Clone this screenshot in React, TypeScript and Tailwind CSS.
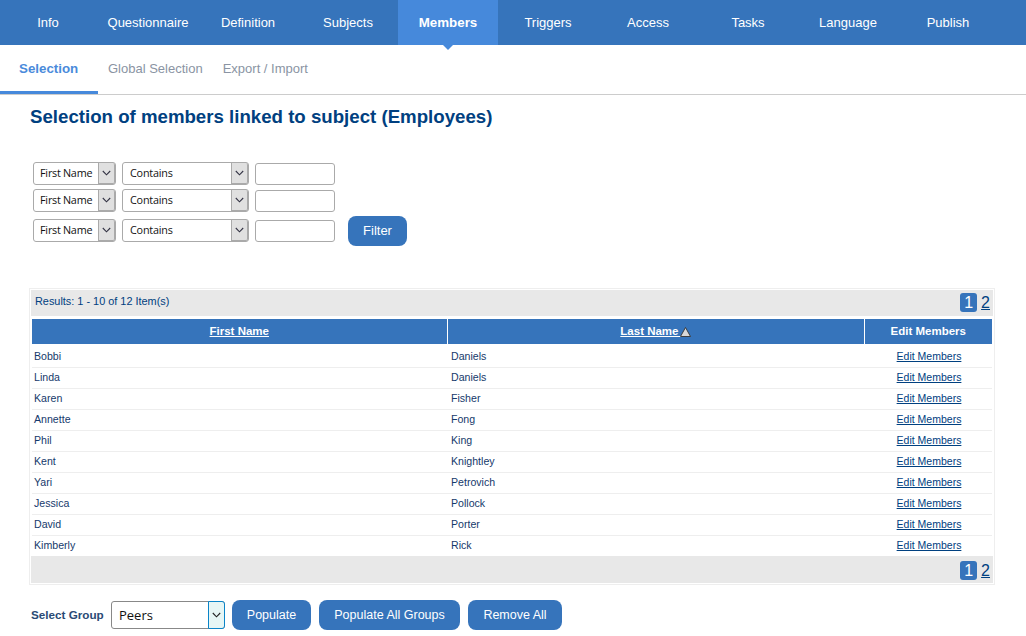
import React from "react";

const tabs = ["Info", "Questionnaire", "Definition", "Subjects", "Members", "Triggers", "Access", "Tasks", "Language", "Publish"];
const rows = [
  ["Bobbi", "Daniels"], ["Linda", "Daniels"], ["Karen", "Fisher"], ["Annette", "Fong"], ["Phil", "King"],
  ["Kent", "Knightley"], ["Yari", "Petrovich"], ["Jessica", "Pollock"], ["David", "Porter"], ["Kimberly", "Rick"],
];

function Chevron({ color = "#334" }: { color?: string }) {
  return (
    <svg width="9" height="6" viewBox="0 0 9 6" fill="none">
      <path d="M0.8 1 L4.5 4.8 L8.2 1" stroke={color} strokeWidth="1.1" />
    </svg>
  );
}

function FSelect({ label, w, pl }: { label: string; w: string; pl: string }) {
  return (
    <div className={`${w} flex h-full rounded-[3px] border border-[#aaa] bg-white`}>
      <span className={`flex-1 ${pl} flex items-center text-[10.8px] text-[#111] font-['Open_Sans',sans-serif] tracking-[-0.2px] [word-spacing:-0.4px]`}>{label}</span>
      <span className="w-[17px] flex items-center justify-center bg-[#e0e0e0] border-l border-r border-b border-[#aaa] rounded-r-[2px]">
        <Chevron />
      </span>
    </div>
  );
}

function FilterRow({ children }: { children?: React.ReactNode }) {
  return (
    <div className="flex items-center h-[23px]">
      <FSelect label="First Name" w="w-[83px]" pl="pl-[6px]" />
      <div className="w-[6px]" />
      <FSelect label="Contains" w="w-[127px]" pl="pl-[7px]" />
      <div className="w-[6px]" />
      <div className="w-[80px] h-[22px] rounded-[3px] border border-[#aaa] bg-white" />
      {children}
    </div>
  );
}

function Btn({ children, w }: { children: React.ReactNode; w: string }) {
  return (
    <button className={`${w} h-[30px] rounded-[8px] bg-[#3674bb] text-white text-[12.5px]`}>
      {children}
    </button>
  );
}

function Pager() {
  return (
    <div className="flex items-center justify-end gap-[4px] text-[16px] leading-[19px] pr-[3px]">
      <span className="w-[17px] h-[19px] rounded-[3px] bg-[#3674bb] text-white text-center">1</span>
      <span className="underline text-[#004080]">2</span>
    </div>
  );
}

export default function App() {
  return (
    <div className="w-[1026px] h-[636px] overflow-hidden bg-white font-['Liberation_Sans',sans-serif]">
      <nav className="h-[45px] bg-[#3674bb] flex -ml-[2px]">
        {tabs.map((t) => (
          <div
            key={t}
            className={`relative w-[100px] flex items-center justify-center text-white ${t === "Members" ? "bg-[#4689db] font-bold text-[13.33px]" : "text-[13px]"}`}
          >
            {t}
            {t === "Members" && (
              <span className="absolute left-1/2 -translate-x-1/2 top-full w-0 h-0 border-l-[5px] border-r-[5px] border-t-[5px] border-l-transparent border-r-transparent border-t-[#4689db]" />
            )}
          </div>
        ))}
      </nav>
      <div className="h-[50px] border-b border-[#ccc] flex text-[13px]">
        <div className="w-[98px] h-[49px] border-b-[3px] border-[#4689db] pt-[14px] pl-[19px] font-bold text-[13.33px] text-[#4a8bdb]">Selection</div>
        <div className="pt-[14px] pl-[10px] text-[#8a94a3]">Global Selection</div>
        <div className="pt-[14px] pl-[20px] text-[#8a94a3]">Export / Import</div>
      </div>

      <h1 className="ml-[30px] mt-[11px] text-[18.67px] leading-[22px] font-bold text-[#004080]">
        Selection of members linked to subject (Employees)
      </h1>

      <div className="ml-[33px] mt-[34px] flex flex-col">
        <FilterRow />
        <div className="h-[4px]" />
        <FilterRow />
        <div className="h-[7px]" />
        <FilterRow>
          <button className="ml-[13px] w-[59px] h-[30px] shrink-0 rounded-[8px] bg-[#3674bb] text-white text-[13px]">Filter</button>
        </FilterRow>
      </div>

      <div className="ml-[29px] mt-[46px] w-[966px] h-[297px] border border-[#eee] p-px flex flex-col">
        <div className="h-[26px] shrink-0 bg-[#e8e8e8] flex items-center justify-between pl-[4px]">
          <span className="text-[10.9px] text-[#004080] -mt-[4px]">Results: 1 - 10 of 12 Item(s)</span>
          <div className="-mt-[2px]"><Pager /></div>
        </div>
        <table className="mt-[3px] ml-[1px] w-[960px] table-fixed border-collapse text-[10.6px] text-[#15396b]">
          <colgroup>
            <col className="w-[415px]" />
            <col className="w-[417px]" />
            <col className="w-[128px]" />
          </colgroup>
          <thead>
            <tr className="h-[25px] bg-[#3674bb] text-white text-[11.5px] font-bold">
              <th className="text-center border-r border-white"><span className="underline">First Name</span></th>
              <th className="text-center border-r border-white">
                <span className="underline">Last Name&nbsp;</span>
                <svg className="inline-block -ml-[2px]" width="11" height="10" viewBox="0 0 11 10">
                  <path d="M5.5 0.5 L10.5 9.5 L0.5 9.5 Z" fill="#d8d8d8" stroke="#333" strokeWidth="0.9" />
                </svg>
              </th>
              <th className="text-center">Edit Members</th>
            </tr>
          </thead>
          <tbody>
            {rows.map(([a, b], i) => (
              <tr key={a} className={`${i === 0 ? "h-[23px]" : "h-[21px]"} ${i < 9 ? "border-b border-[#eee]" : ""}`}>
                <td className={`pl-[2px] ${i === 0 ? "pt-[3px]" : ""}`}>{a}</td>
                <td className={`pl-[4px] ${i === 0 ? "pt-[3px]" : ""}`}>{b}</td>
                <td className={`text-center pl-[2px] ${i === 0 ? "pt-[3px]" : ""}`}><span className="underline text-[#004080] text-[10.5px]">Edit Members</span></td>
              </tr>
            ))}
          </tbody>
        </table>
        <div className="flex-1 bg-[#e8e8e8] flex items-end justify-end pb-[3px]">
          <Pager />
        </div>
      </div>

      <div className="ml-[31px] mt-[15px] flex items-center">
        <span className="text-[11.7px] font-bold text-[#2a4a75] w-[80px]">Select Group</span>
        <div className="w-[114px] h-[28px] flex rounded-[3px] border border-[#888] bg-white">
          <span className="flex-1 pl-[7px] pt-[1px] flex items-center text-[13px] text-[#111] font-['Open_Sans',sans-serif]">Peers</span>
          <span className="w-[17px] flex items-center justify-center bg-[#e6f6f5] border border-[#0a84c8] rounded-r-[3px] -m-px">
            <Chevron color="#222" />
          </span>
        </div>
        <div className="ml-[7px] flex gap-[8px]">
          <Btn w="w-[79px]">Populate</Btn>
          <Btn w="w-[141px]">Populate All Groups</Btn>
          <Btn w="w-[94px]">Remove All</Btn>
        </div>
      </div>
    </div>
  );
}
